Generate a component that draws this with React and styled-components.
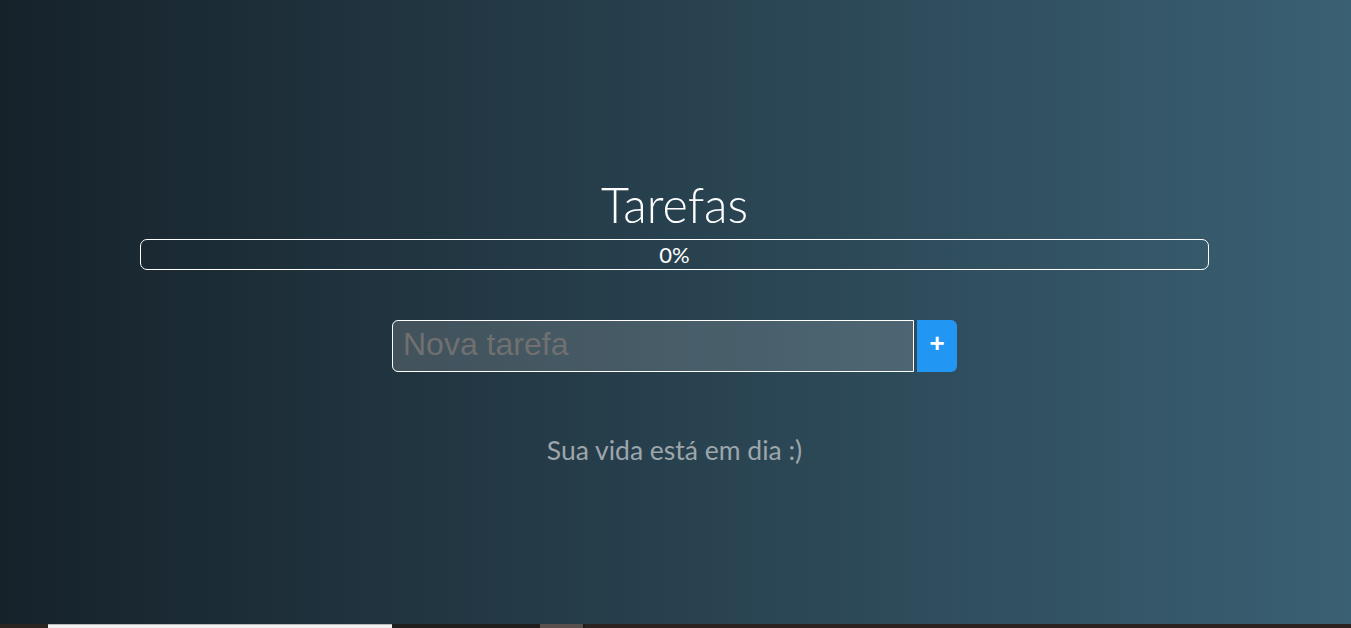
import React from "react";
import styled, { createGlobalStyle } from "styled-components";

const Global = createGlobalStyle`
  html, body { margin: 0; padding: 0; background: #2a2320; }
  body { font-family: Lato, "Open Sans", sans-serif; overflow: hidden; }
  * { box-sizing: border-box; }
`;

const Page = styled.main`
  height: 624px;
  background: linear-gradient(to right, #16222a, #3a6073);
  display: flex;
  flex-direction: column;
  align-items: center;
  padding-top: 175px;
  color: #fff;
`;

const Title = styled.h1`
  margin: 0;
  font-family: Lato, sans-serif;
  font-weight: 300;
  font-size: 48.5px;
  line-height: 58px;
  color: #fff;
  transform: translateX(-1px);
`;

const Progress = styled.div`
  margin-top: 6px;
  width: 1069px;
  height: 31px;
  border: 1px solid #fff;
  border-radius: 7px;
  display: flex;
  align-items: center;
  justify-content: center;
  transform: translateX(-1px);
`;

const Percent = styled.span`
  font-family: Lato, sans-serif;
  font-weight: 400;
  font-size: 22px;
  line-height: 1;
  color: #fff;
`;

const Form = styled.form`
  margin-top: 50px;
  display: flex;
  gap: 3px;
  transform: translateX(-1px);
`;

const Input = styled.input`
  width: 522px;
  height: 52px;
  border: 1px solid #fff;
  border-radius: 6px 0 0 6px;
  background: rgba(255, 255, 255, 0.15);
  padding: 0 10px 3px 10px;
  font-family: "Liberation Sans", Arial, sans-serif;
  font-size: 32px;
  color: #fff;
  outline: none;
  &::placeholder { color: #707070; }
`;

const AddButton = styled.button`
  width: 40px;
  height: 52px;
  border: none;
  border-radius: 0 6px 6px 0;
  background: #2196f3;
  color: #fff;
  font-family: "Liberation Sans", Arial, sans-serif;
  font-weight: 700;
  font-size: 26px;
  padding: 0 0 5px;
  display: flex;
  align-items: center;
  justify-content: center;
`;

const Empty = styled.p`
  margin: 62px 0 0;
  font-family: Lato, sans-serif;
  font-size: 26.5px;
  color: #9ea6ab;
  transform: translateX(-1px);
`;

const Strip = styled.div`
  height: 4px;
  display: flex;
  background: #2a2320;
`;

const StripPart = styled.div`
  width: ${(p) => p.$w}px;
  flex: ${(p) => (p.$grow ? 1 : "none")};
  background: ${(p) => p.$bg};
  border-top: ${(p) => (p.$border ? "1px solid #bbb" : "none")};
`;

export default function App() {
  return (
    <>
      <Global />
      <Page>
        <Title>Tarefas</Title>
        <Progress>
          <Percent>0%</Percent>
        </Progress>
        <Form onSubmit={(e) => e.preventDefault()}>
          <Input placeholder="Nova tarefa" />
          <AddButton type="submit">+</AddButton>
        </Form>
        <Empty>Sua vida está em dia :)</Empty>
      </Page>
      <Strip>
        <StripPart $w={48} $bg="#2b2522" />
        <StripPart $w={344} $bg="#f2f2f2" $border />
        <StripPart $w={148} $bg="#211f1e" />
        <StripPart $w={43} $bg="#57504c" />
        <StripPart $w={2} $bg="#1e1c1b" />
        <StripPart $grow $bg="#2b2320" />
      </Strip>
    </>
  );
}
